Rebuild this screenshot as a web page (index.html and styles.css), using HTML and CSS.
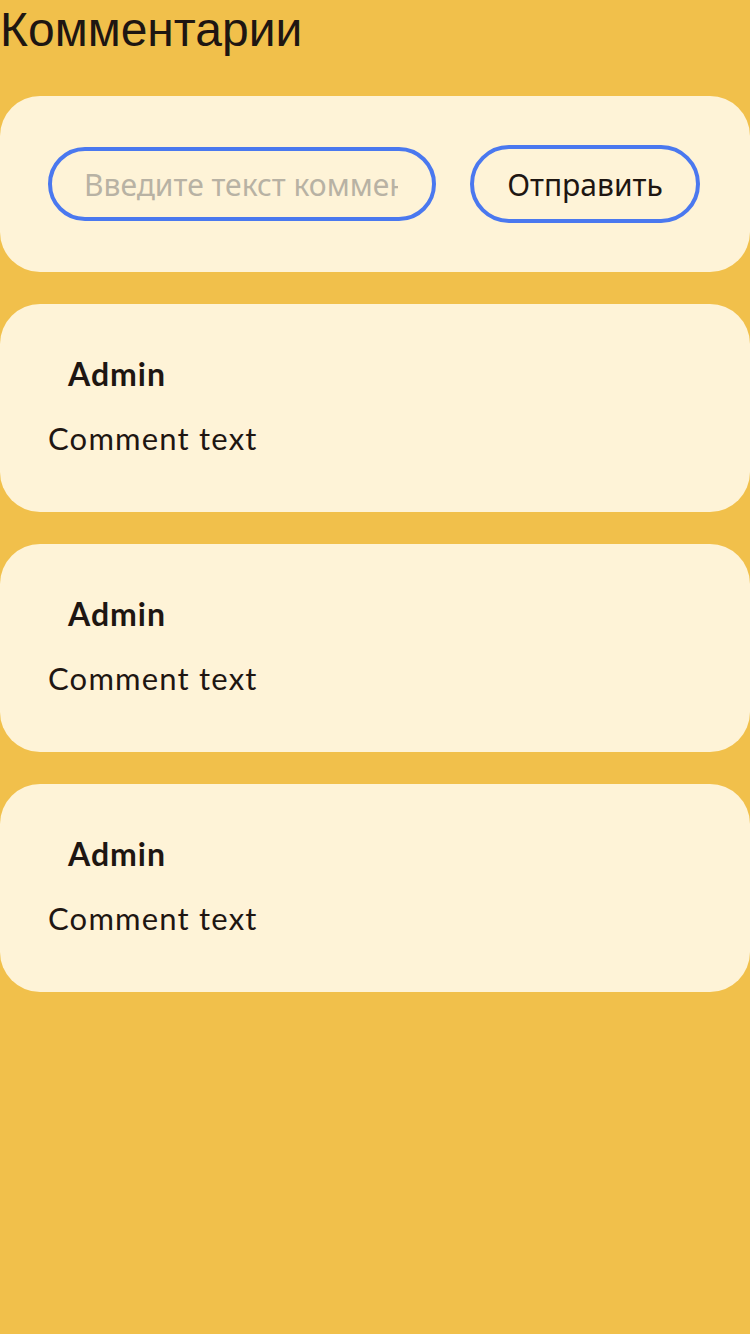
FILE: index.html
```html
<!DOCTYPE html>
<html lang="ru">
<head>
<meta charset="utf-8">
<title>Комментарии</title>
<link rel="stylesheet" href="styles.css">
</head>
<body>
<main class="page">
  <h1 class="title">Комментарии</h1>
  <form class="card form">
    <input class="field" type="text" placeholder="Введите текст комментария">
    <button class="send" type="button">Отправить</button>
  </form>
  <section class="list">
    <article class="card comment">
      <div class="author">Admin</div>
      <p class="text">Comment text</p>
    </article>
    <article class="card comment">
      <div class="author">Admin</div>
      <p class="text">Comment text</p>
    </article>
    <article class="card comment">
      <div class="author">Admin</div>
      <p class="text">Comment text</p>
    </article>
  </section>
</main>
</body>
</html>
```
FILE: styles.css
```css
html, body {
  margin: 0;
  padding: 0;
  background: #F1C04B;
  min-height: 1334px;
}
.page {
  display: flex;
  flex-direction: column;
}
.title {
  margin: 0;
  padding-top: 3px;
  font-family: "Liberation Sans", Arial, sans-serif;
  font-weight: 400;
  font-size: 48px;
  line-height: 54px;
  color: #1E1612;
}
.card {
  background: #FEF3D7;
  border-radius: 40px;
}
.form {
  margin-top: 39px;
  height: 176px;
  box-sizing: border-box;
  padding: 0 49px 0 48px;
  display: flex;
  align-items: center;
  gap: 34px;
}
.field {
  width: 388px;
  height: 74px;
  box-sizing: border-box;
  border: 4px solid #4A78EF;
  border-radius: 37px;
  background: transparent;
  padding: 0 34px 0 32px;
  font-family: "Noto Sans", "Open Sans", sans-serif;
  font-size: 30px;
  color: #1E1612;
  outline: none;
}
.field::placeholder {
  color: #B8B2A4;
}
.send {
  width: 230px;
  height: 78px;
  box-sizing: border-box;
  border: 4px solid #4A78EF;
  border-radius: 39px;
  background: transparent;
  font-family: "Noto Sans", "Open Sans", sans-serif;
  font-size: 30px;
  color: #1E1612;
  padding: 0;
}
.list {
  margin-top: 32px;
  display: flex;
  flex-direction: column;
  gap: 32px;
}
.comment {
  height: 208px;
  box-sizing: border-box;
  padding: 50px 48px 0;
  font-family: Lato, "Noto Sans", sans-serif;
  color: #1E1612;
}
.author {
  padding-left: 20px;
  font-weight: 700;
  font-size: 32px;
  line-height: 40px;
  letter-spacing: 1px;
}
.text {
  margin: 24px 0 0;
  font-size: 31px;
  line-height: 40px;
  letter-spacing: 1.2px;
}
```
